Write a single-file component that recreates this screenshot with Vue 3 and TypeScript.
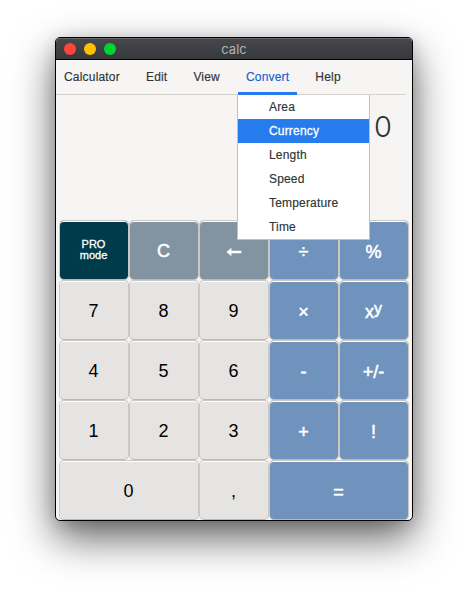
<script setup lang="ts">
import { ref } from 'vue'

interface Key {
  label: string
  kind: 'digit' | 'op' | 'edit' | 'mode'
  wide?: boolean
  icon?: boolean
  sup?: string
}

const menus = ['Calculator', 'Edit', 'View', 'Convert', 'Help']
const units = ['Area', 'Currency', 'Length', 'Speed', 'Temperature', 'Time']
const openMenu = ref('Convert')
const selected = ref('Currency')
const display = ref('0')

const keys: Key[] = [
  { label: 'PRO\nmode', kind: 'mode' },
  { label: 'C', kind: 'edit' },
  { label: '←', kind: 'edit', icon: true },
  { label: '÷', kind: 'op' },
  { label: '%', kind: 'op' },
  { label: '7', kind: 'digit' },
  { label: '8', kind: 'digit' },
  { label: '9', kind: 'digit' },
  { label: '×', kind: 'op' },
  { label: 'x', kind: 'op', sup: 'y' },
  { label: '4', kind: 'digit' },
  { label: '5', kind: 'digit' },
  { label: '6', kind: 'digit' },
  { label: '-', kind: 'op' },
  { label: '+/-', kind: 'op' },
  { label: '1', kind: 'digit' },
  { label: '2', kind: 'digit' },
  { label: '3', kind: 'digit' },
  { label: '+', kind: 'op' },
  { label: '!', kind: 'op' },
  { label: '0', kind: 'digit', wide: true },
  { label: ',', kind: 'digit' },
  { label: '=', kind: 'op', wide: true },
]
</script>

<template>
  <main class="desktop">
    <section class="window">
      <header class="titlebar">
        <div class="lights">
          <i class="light close"></i>
          <i class="light minimize"></i>
          <i class="light zoom"></i>
        </div>
        <span class="title">calc</span>
      </header>
      <nav class="menubar">
        <div
          v-for="m in menus"
          :key="m"
          class="menu"
          :class="{ open: m === openMenu }"
          @click="openMenu = m"
        >
          {{ m }}
          <ul v-if="m === openMenu" class="dropdown">
            <li
              v-for="u in units"
              :key="u"
              :class="{ selected: u === selected }"
              @click.stop="selected = u"
            >{{ u }}</li>
          </ul>
        </div>
      </nav>
      <output class="display">{{ display }}</output>
      <div class="keypad">
        <button
          v-for="k in keys"
          :key="k.label"
          class="key"
          :class="[k.kind, { wide: k.wide }]"
        >
          <svg v-if="k.icon" width="16" height="10" viewBox="0 0 16 10">
            <path d="M0.5 5 L5.4 0.8 V3.8 H15.3 V6.2 H5.4 V9.2 Z" fill="#fff" />
          </svg>
          <span v-else>{{ k.label }}<sup v-if="k.sup">{{ k.sup }}</sup></span>
        </button>
      </div>
    </section>
  </main>
</template>

<style>
body {
  background: #fff;
}
</style>

<style scoped>
.desktop {
  box-sizing: border-box;
  width: 468px;
  height: 594px;
  padding: 37px 55px 0;
  overflow: hidden;
  font-family: "Liberation Sans", Arial, sans-serif;
}
.window {
  box-sizing: border-box;
  width: 358px;
  height: 484px;
  border: 1px solid #000;
  border-radius: 5px;
  background: #f6f5f4;
  box-shadow: 0 17px 42px rgba(0, 0, 0, 0.62), 0 3px 16px rgba(0, 0, 0, 0.14);
}
.titlebar {
  display: grid;
  grid-template-columns: 1fr auto 1fr;
  align-items: center;
  height: 22px;
  box-sizing: border-box;
  border-bottom: 1px solid #000;
  border-radius: 4px 4px 0 0;
  background: linear-gradient(#47484b, #37383b);
  box-shadow: inset 0 1px 0 #66676a;
}
.lights {
  display: flex;
  gap: 8px;
  padding-left: 8px;
}
.light {
  width: 12px;
  height: 12px;
  border-radius: 50%;
}
.close { background: #ff443a; }
.minimize { background: #ffc000; }
.zoom { background: #00d52f; }
.title {
  font-family: Inter, sans-serif;
  font-size: 13px;
  line-height: 20px;
  color: #b2b3b4;
}
.menubar {
  display: flex;
  box-sizing: border-box;
  width: 350px;
  height: 35px;
  border-bottom: 1px solid #d5d1cd;
}
.menu {
  position: relative;
  height: 35px;
  box-sizing: border-box;
  padding: 0 8px;
  margin-right: 10px;
  font-size: 12px;
  line-height: 34px;
  letter-spacing: 0.19px;
  color: #2e3436;
  -webkit-text-stroke: 0.15px;
}
.menu.open {
  color: #1560d4;
  border-bottom: 3px solid #267cec;
}
.dropdown {
  position: absolute;
  top: 35px;
  left: -1px;
  z-index: 2;
  width: 131px;
  margin: 0;
  padding: 0;
  list-style: none;
  background: #fff;
  border: 1px solid #c3c1bf;
  border-top: 0;
  color: #2e3436;
}
.dropdown li {
  height: 24px;
  padding-left: 31px;
  line-height: 25px;
}
.dropdown .selected {
  background: #267cec;
  color: #fff;
  -webkit-text-stroke: 0.3px #fff;
}
.display {
  display: block;
  box-sizing: border-box;
  height: 125px;
  padding: 14px 20px 0 0;
  text-align: right;
  font-family: Inter, sans-serif;
  font-weight: 300;
  font-size: 29px;
  line-height: 36px;
  color: #2e3436;
}
.keypad {
  display: grid;
  grid-template-columns: repeat(5, 70px);
  grid-auto-rows: 60px;
  padding-left: 3px;
}
.key {
  display: flex;
  align-items: center;
  justify-content: center;
  box-sizing: border-box;
  margin: 0;
  padding: 2px 1px 0 0;
  border: 1px solid #cdc7c2;
  border-bottom-color: #bfb8b1;
  border-radius: 5px;
  font-family: inherit;
  font-size: 18px;
  box-shadow: inset 0 1px 0 #fff;
}
.wide { grid-column: span 2; }
.digit {
  background: #e5e4e2;
  color: #000;
}
.op, .edit, .mode {
  color: #fff;
  -webkit-text-stroke: 0.5px #fff;
}
.op {
  padding-top: 4px;
  background: #6f93bd;
}
.edit {
  padding-top: 3px;
  background: #8294a2;
}
.mode {
  padding-top: 0;
  background: #003b4c;
  font-size: 11px;
  line-height: 11px;
  white-space: pre-line;
  -webkit-text-stroke-width: 0.3px;
}
sup {
  font-size: 16px;
  line-height: 0;
  vertical-align: 4px;
}
</style>
